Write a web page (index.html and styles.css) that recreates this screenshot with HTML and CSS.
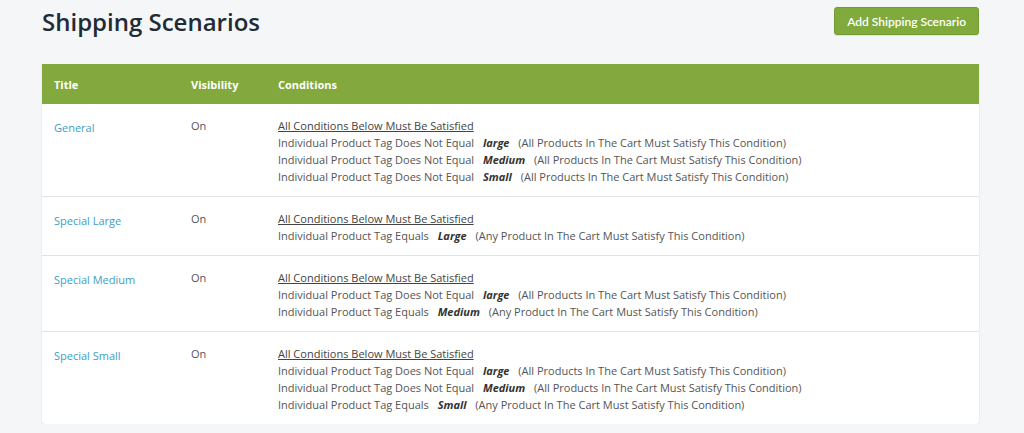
FILE: index.html
```html
<!DOCTYPE html>
<html>
<head>
<meta charset="utf-8">
<link rel="stylesheet" href="styles.css">
</head>
<body>
<div class="page">
  <div class="page-header">
    <h1 class="page-title">Shipping Scenarios</h1>
    <button class="btn-primary">Add Shipping Scenario</button>
  </div>
  <div class="card">
    <table class="scenarios">
      <thead>
        <tr>
          <th class="col-title">Title</th>
          <th class="col-vis">Visibility</th>
          <th>Conditions</th>
        </tr>
      </thead>
      <tbody>
        <tr>
          <td><a class="link" href="#">General</a></td>
          <td>On</td>
          <td>
            <div class="cond-head">All Conditions Below Must Be Satisfied</div>
            <div>Individual Product Tag Does Not Equal <b class="val">large</b> (All Products In The Cart Must Satisfy This Condition)</div>
            <div>Individual Product Tag Does Not Equal <b class="val">Medium</b> (All Products In The Cart Must Satisfy This Condition)</div>
            <div>Individual Product Tag Does Not Equal <b class="val">Small</b> (All Products In The Cart Must Satisfy This Condition)</div>
          </td>
        </tr>
        <tr>
          <td><a class="link" href="#">Special Large</a></td>
          <td>On</td>
          <td>
            <div class="cond-head">All Conditions Below Must Be Satisfied</div>
            <div>Individual Product Tag Equals <b class="val">Large</b> (Any Product In The Cart Must Satisfy This Condition)</div>
          </td>
        </tr>
        <tr>
          <td><a class="link" href="#">Special Medium</a></td>
          <td>On</td>
          <td>
            <div class="cond-head">All Conditions Below Must Be Satisfied</div>
            <div>Individual Product Tag Does Not Equal <b class="val">large</b> (All Products In The Cart Must Satisfy This Condition)</div>
            <div>Individual Product Tag Equals <b class="val">Medium</b> (Any Product In The Cart Must Satisfy This Condition)</div>
          </td>
        </tr>
        <tr>
          <td><a class="link" href="#">Special Small</a></td>
          <td>On</td>
          <td>
            <div class="cond-head">All Conditions Below Must Be Satisfied</div>
            <div>Individual Product Tag Does Not Equal <b class="val">large</b> (All Products In The Cart Must Satisfy This Condition)</div>
            <div>Individual Product Tag Does Not Equal <b class="val">Medium</b> (All Products In The Cart Must Satisfy This Condition)</div>
            <div>Individual Product Tag Equals <b class="val">Small</b> (Any Product In The Cart Must Satisfy This Condition)</div>
          </td>
        </tr>
      </tbody>
    </table>
  </div>
</div>
</body>
</html>
```
FILE: styles.css
```css
html, body {
  margin: 0;
  padding: 0;
  background: #f4f6f8;
}
body {
  font-family: "Open Sans", "Noto Sans", sans-serif;
  color: #4a4a4a;
}
.page {
  padding: 7px 45px 0 42px;
}
.page-header {
  display: flex;
  justify-content: space-between;
  align-items: flex-start;
  height: 57px;
}
.page-title {
  margin: 0;
  font-size: 24px;
  font-weight: 600;
  line-height: 30px;
  color: #212b36;
}
.btn-primary {
  height: 28px;
  padding: 0 12px;
  background: #80aa3c;
  border: 1px solid #739a34;
  border-radius: 3px;
  color: #fff;
  font-family: "Lato", "Open Sans", sans-serif;
  font-size: 12px;
  font-weight: 600;
  box-shadow: 0 1px 1px rgba(0,0,0,0.08);
}
.card {
  background: #fff;
  border-radius: 0 0 3px 3px;
  box-shadow: 0 1px 2px rgba(0,0,0,0.12);
  overflow: hidden;
}
.scenarios {
  width: 100%;
  border-collapse: collapse;
  font-size: 11px;
}
.scenarios th {
  background: #82a83e;
  color: #fff;
  text-align: left;
  font-weight: 700;
  height: 40px;
  padding: 0 12px;
  font-size: 11px;
}
.col-title { width: 113px; }
.col-vis { width: 63px; }
.scenarios td {
  vertical-align: top;
  padding: 13px 12px 11px;
  line-height: 17px;
  border-top: 1px solid #e3e3e3;
  color: #555;
}
.scenarios tbody tr:first-child td {
  border-top: none;
}
.link {
  color: #3a9ec6;
  text-decoration: none;
  display: inline-block;
  margin-top: 2px;
}
.cond-head {
  text-decoration: underline;
  color: #444;
}
.val {
  font-style: italic;
  font-weight: 700;
  color: #333;
  margin: 0 6px;
}
```
